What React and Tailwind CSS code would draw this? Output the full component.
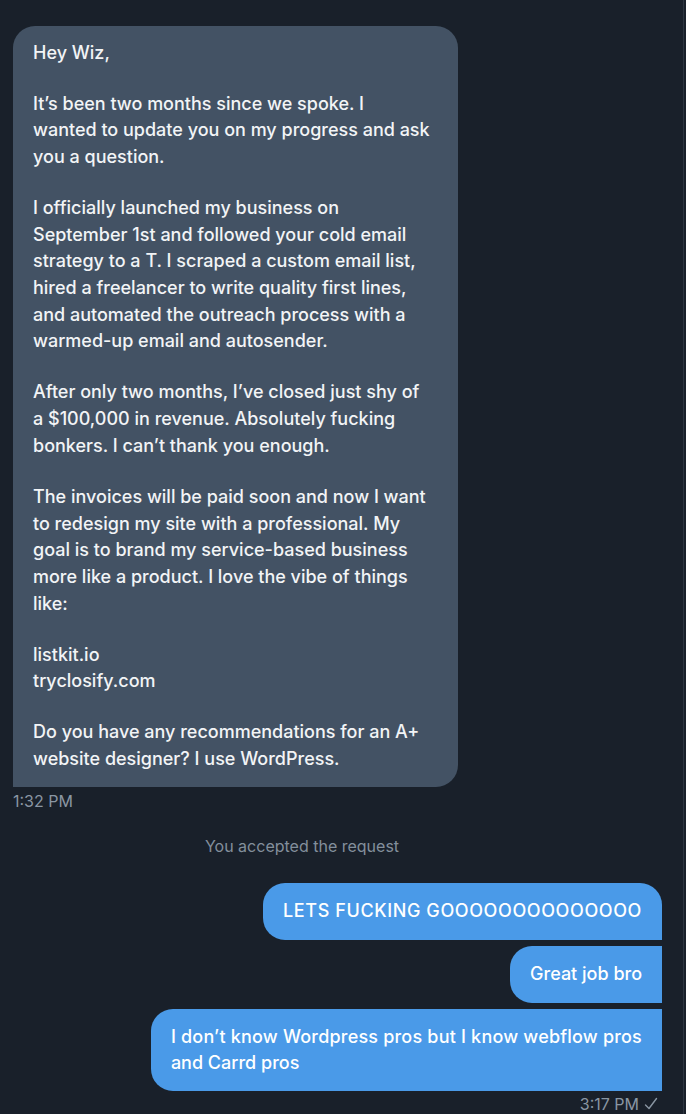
const paragraphs = [
  ["Hey Wiz,"],
  [
    "It’s been two months since we spoke. I",
    "wanted to update you on my progress and ask",
    "you a question.",
  ],
  [
    "I officially launched my business on",
    "September 1st and followed your cold email",
    "strategy to a T. I scraped a custom email list,",
    "hired a freelancer to write quality first lines,",
    "and automated the outreach process with a",
    "warmed-up email and autosender.",
  ],
  [
    "After only two months, I’ve closed just shy of",
    "a $100,000 in revenue. Absolutely fucking",
    "bonkers. I can’t thank you enough.",
  ],
  [
    "The invoices will be paid soon and now I want",
    "to redesign my site with a professional. My",
    "goal is to brand my service-based business",
    "more like a product. I love the vibe of things",
    "like:",
  ],
  ["listkit.io", "tryclosify.com"],
  [
    "Do you have any recommendations for an A+",
    "website designer? I use WordPress.",
  ],
];

const font = { fontFamily: "Inter, 'Noto Sans', sans-serif" };

function Lines({ lines }) {
  return lines.map((l, i) => (
    <span key={i} className="block whitespace-nowrap">
      {l}
    </span>
  ));
}

export default function App() {
  return (
    <div className="w-[686px] h-[1114px] bg-[#19202a] flex overflow-hidden" style={font}>
      <div className="flex-1 flex flex-col border-r border-[#2e3641] mr-[2px]">
        {/* incoming */}
        <div className="pt-[26px] pl-[13px]">
          <div className="w-[445px] bg-[#435264] rounded-[22px] rounded-bl-none px-5 pt-[13.5px] pb-[14.5px] text-[#f2f4f6] text-[18px] leading-[26.7px] font-medium">
            {paragraphs.map((p, i) => (
              <div key={i} className={i > 0 ? "mt-[24.3px]" : ""}>
                <Lines lines={p} />
              </div>
            ))}
          </div>
          <div className="text-[16px] text-[#8a96a3] mt-[6px] leading-4">1:32 PM</div>
        </div>

        <div className="flex justify-center pr-[79px] mt-[27px] text-[16px] leading-5 text-[#838f9c]">
          You accepted the request
        </div>

        {/* outgoing */}
        <div className="flex flex-col items-end gap-[6px] pr-[21px] mt-[27px] text-white text-[18px] leading-[26.7px] font-medium">
          <div className="bg-[#4a9ae8] rounded-[22px] rounded-br-none px-5 py-[15px] tracking-[0.6px]">
            LETS FUCKING GOOOOOOOOOOOOOO
          </div>
          <div className="bg-[#4a9ae8] rounded-l-[22px] px-5 py-[15px]">Great job bro</div>
          <div className="bg-[#4a9ae8] rounded-l-[22px] px-5 pt-[15px] pb-[14px]">
            <span className="block whitespace-nowrap tracking-[0.2px]">I don’t know Wordpress pros but I know webflow pros</span>
            <span className="block">and Carrd pros</span>
          </div>
        </div>
        <div className="flex items-center justify-end gap-[5px] pr-[25px] mt-[5px] text-[16px] text-[#8a96a3] leading-4">
          3:17 PM
          <svg width="14" height="14" viewBox="0 0 14 14" fill="none" stroke="currentColor" strokeWidth="1.4" strokeLinecap="round" strokeLinejoin="round">
            <path d="M1.5 8 L5 11.5 L12.5 1.5" />
          </svg>
        </div>
      </div>
    </div>
  );
}
